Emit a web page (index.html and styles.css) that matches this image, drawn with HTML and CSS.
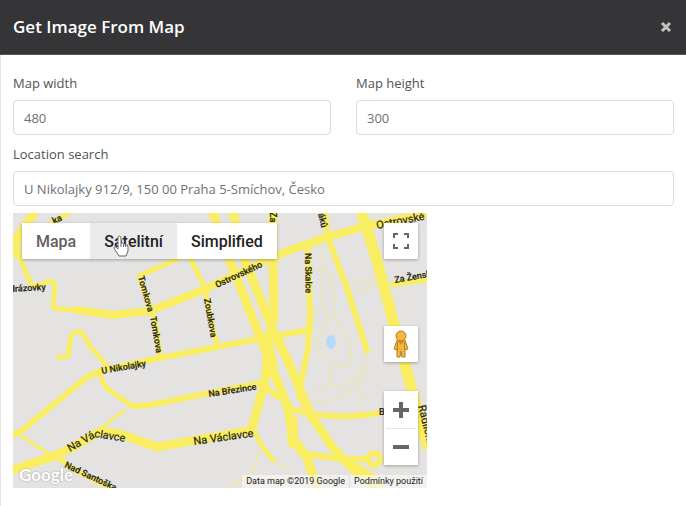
FILE: index.html
```html
<!DOCTYPE html>
<html lang="en">
<head>
<meta charset="utf-8">
<title>Get Image From Map</title>
<link rel="stylesheet" href="styles.css">
</head>
<body>
<main class="dialog" role="dialog" aria-labelledby="dialog-title">
  <header class="dialog-header">
    <h1 class="dialog-title" id="dialog-title">Get Image From Map</h1>
    <button class="close" type="button" aria-label="Close">
      <svg class="close-icon" viewBox="0 0 12 12"><path d="M2 2 10 10M10 2 2 10"/></svg>
    </button>
  </header>
  <form class="dialog-body">
    <div class="field-row">
      <div class="field">
        <label for="map-width">Map width</label>
        <input id="map-width" type="text" value="480">
      </div>
      <div class="field">
        <label for="map-height">Map height</label>
        <input id="map-height" type="text" value="300">
      </div>
    </div>
    <div class="field">
      <label for="location">Location search</label>
      <input id="location" type="text" value="U Nikolajky 912/9, 150 00 Praha 5-Smíchov, Česko">
    </div>
    <div class="map">
      <svg class="map-canvas" viewBox="13 213 414 275">
        <g class="path">
          <path d="M310 250 322 245 322 270M310 272 327 270 338 280M325 272Q319 280 321 298L327 316Q333 325 336 315L335 300 329 275M321 305 313 318 314 326M327 318 320 335 318 352Q325 364 345 367 353 366 351 348L345 332 335 318M329 366 332 378 328 386 308 394M332 384Q345 392 352 378L364 368M350 292 379 286M348 285 379 277M303 405Q335 402 349 393L362 374 367 352M357 412 361 402 360 385 365 370"/>
        </g>
        <g class="road road-thin">
          <path d="M18 434 48 453"/>
          <path d="M125 411Q108 420 103 429"/>
          <path class="faint" d="M260 451 253 471 230 487M277 463 290 471"/>
        </g>
        <g class="road road-small">
          <path d="M18 253 30 283 36 286 49 281Q55 281 55 288L53 304Q53 309 60 309L77 310"/>
          <path d="M58 357 66 357Q70 354 69 348L71 336Q74 331 82 332L90 346 107 366"/>
          <path d="M57 457 73 469 113 489"/>
          <path d="M252 428 262 446 273 460"/>
          <path d="M69 213 22 240"/>
          <path d="M100 373Q102 386 112 392L132 406"/>
          <path d="M150 271 139 276 148 300 156 325 160 355"/>
          <path d="M190 258 205 288 210 315 217 346"/>
          <path d="M150 271 180 258"/>
          <path d="M190 258 198 273"/>
        </g>
        <g class="road">
          <path d="M77 310 113 315 150 311 203 290 260 263 290 250 327 237 367 226 430 213" class="wide"/>
          <path d="M13 434 20 432 87 377 100 371 150 360 253 340 310 330"/>
          <path d="M132 406 150 405 260 383 278 397"/>
          <path d="M308 248 310 310 308 348 302 378 299 398"/>
          <path d="M325 213 328 238 346 285 367 351"/>
          <path d="M292 409Q330 421 379 413"/>
          <path d="M300 453 340 459 367 459"/>
          <path d="M393 284 430 279"/>
          <path d="M347 461 372 475 380 488"/>
          <circle cx="374" cy="459" r="6"/>
        </g>
        <g class="road road-main">
          <path d="M34 213 15 241 17 254"/>
          <path d="M13 470 57 455 75 446 100 431 120 434 157 447 253 430"/>
          <path d="M213 213 230 261 262 342 288 408 293 438 307 458 317 488"/>
          <path d="M233 213 245 261 273 330 292 370 310 414 333 448 352 468 378 488"/>
          <path d="M273 213 273 258 274 315 268 348 265 381 252 428"/>
        </g>
        <g class="road road-major">
          <path d="M362 213 377 261 405 365 427 445"/>
          <path d="M266 338 272 365"/>
          <path d="M292 420 293 443"/>
        </g>
        <ellipse class="pond" cx="331" cy="342" rx="5" ry="7"/>
        <g class="label">
          <text transform="translate(54 224) rotate(-25)">ka</text>
          <text transform="translate(10 292) rotate(-3)">drázovky</text>
          <text transform="translate(138 277) rotate(74)">Tomkova</text>
          <text transform="translate(150 317) rotate(80)">Tomkova</text>
          <text transform="translate(204 299) rotate(80)">Zoubkova</text>
          <text transform="translate(217 288) rotate(-25)">Ostrovského</text>
          <text transform="translate(305 253) rotate(89)">Na Skalce</text>
          <text transform="translate(318 214) rotate(76)">áků</text>
          <text transform="translate(270 212) rotate(90)">Za</text>
          <text transform="translate(395 283) rotate(-10)">Za Žensk</text>
          <text transform="translate(102 374) rotate(-10)">U Nikolajky</text>
          <text transform="translate(209 397) rotate(-9)">Na Březince</text>
          <text transform="translate(64 467) rotate(25)">Nad Santoška</text>
          <text transform="translate(379 415)">B</text>
        </g>
        <g class="label label-large">
          <text transform="translate(377 229) rotate(-11)">Ostrovské</text>
          <text transform="translate(70 452) rotate(-30)">Na Vá</text>
          <text transform="translate(94 437) rotate(9)">clavce</text>
          <text transform="translate(194 445) rotate(-8)">Na Václavce</text>
          <text transform="translate(418 406) rotate(76)">Radlická</text>
        </g>
      </svg>
      <div class="map-types">
        <button type="button" class="map-type current">Mapa</button>
        <button type="button" class="map-type hovered">Satelitní</button>
        <button type="button" class="map-type">Simplified</button>
      </div>
      <div class="map-side">
        <button type="button" class="tile" aria-label="Fullscreen">
          <svg class="fullscreen-icon" viewBox="0 0 18 18"><path d="M2 6V2H6M12 2H16V6M16 12V16H12M6 16H2V12"/></svg>
        </button>
        <div class="side-bottom">
          <button type="button" class="tile" aria-label="Street View">
            <svg class="pegman" viewBox="0 0 18 28"><path d="M5 10Q9 8 13 10L16 19 13 20 13 27H10L9 21 8 27H5V20L2 19Z"/><path class="shade" d="M5.500 12 5.500 20M12.500 12 12.500 20"/><path class="scarf" d="M5 10H13L9 15Z"/><circle cx="9" cy="6" r="5"/></svg>
          </button>
          <div class="zoom">
            <button type="button" aria-label="Zoom in"><svg viewBox="0 0 18 18"><path d="M9 1V17M1 9H17"/></svg></button>
            <button type="button" aria-label="Zoom out"><svg viewBox="0 0 18 18"><path d="M1 9H17"/></svg></button>
          </div>
        </div>
      </div>
      <span class="brand">Google</span>
      <div class="credits"><span>Data map ©2019 Google</span><a href="#">Podmínky použití</a></div>
      <svg class="pointer" viewBox="0 0 16 22"><path d="M5 12V3Q5 1 6.500 1T8 3V8Q10 7 10.500 9 12 8 12.500 10 15 9 15 12V16L13 21H6L1 13Q1 10 5 14Z"/><path d="M8 8V12M10.500 9V12M12.500 10V12"/></svg>
    </div>
  </form>
</main>
</body>
</html>
```
FILE: styles.css
```css
* { box-sizing: border-box; }
body { margin: 0; background: #fff; font-family: "Open Sans", "Noto Sans", sans-serif; font-size: 13px; color: #505357; }
button { border: 0; padding: 0; background: none; font: inherit; }
.dialog { min-height: 100vh; border-left: 1px solid #e4e4e4; }
.dialog-header { display: flex; align-items: center; justify-content: space-between; height: 55px; margin-left: -1px; padding: 0 13px; background: #353537; border-bottom: 1px solid #555; }
.dialog-title { margin: 0; font-size: 17px; line-height: 24px; font-weight: 600; color: #fff; }
.close { display: flex; padding: 1px; }
.close-icon { width: 12px; height: 12px; fill: none; stroke: #c4c4c4; stroke-width: 3; }
.dialog-body { display: flex; flex-direction: column; gap: 9px; padding: 18px 12px; }
.field-row { display: grid; grid-template-columns: 1fr 1fr; gap: 25px; }
.field { display: flex; flex-direction: column; gap: 7px; }
.field label { line-height: 20px; }
.field input { width: 100%; height: 35px; padding: 0 10px; border: 1px solid #dcdcde; border-radius: 4px; font: inherit; color: #6d7176; background: #fff; outline: 0; }
.map { position: relative; width: 100%; max-width: 414px; margin-top: -2px; overflow: hidden; font-family: Roboto, sans-serif; }
.map-canvas { display: block; width: 100%; background: #e5e3e2; }
.road { fill: none; stroke: #f9ee62; stroke-width: 6; stroke-linejoin: round; stroke-linecap: round; }
.road .wide { stroke-width: 8; }
.road-thin { stroke-width: 3; }
.road-thin .faint { stroke-width: 1; }
.road-small { stroke-width: 5; }
.road-main { stroke-width: 9; }
.road-major { stroke-width: 11; }
.path { fill: none; stroke: #eee79d; stroke-width: 1; }
.pond { fill: #b4dafa; }
.label { font-size: 9px; font-weight: 500; fill: #292814; stroke: #292814; stroke-width: 0.2; }
.label-large { font-size: 11px; font-weight: 400; }
.map-types { position: absolute; top: 10px; left: 9px; display: flex; box-shadow: 0 1px 3px rgba(0, 0, 0, 0.3); }
.map-type { height: 36px; padding: 0 14px; font-size: 16px; font-weight: 500; color: #222; background: #fff; }
.map-type.current { color: #606060; }
.map-type.hovered { background: #ebebeb; }
.map-side { position: absolute; top: 10px; right: 9px; bottom: 23px; display: flex; flex-direction: column; justify-content: space-between; }
.side-bottom { display: flex; flex-direction: column; gap: 29px; }
.tile, .zoom { width: 34px; background: #fff; box-shadow: 0 1px 3px rgba(0, 0, 0, 0.3); }
.tile { display: flex; align-items: center; justify-content: center; height: 36px; }
.fullscreen-icon { width: 18px; height: 18px; fill: none; stroke: #666; stroke-width: 2; }
.pegman { width: 18px; height: 28px; fill: #f4b73b; stroke: #af8131; stroke-width: 1; }
.pegman .shade { fill: none; }
.pegman .scarf { fill: #e0862f; stroke: none; }
.zoom { display: flex; flex-direction: column; padding: 0 2px; }
.zoom button { display: flex; align-items: center; justify-content: center; height: 37px; }
.zoom button + button { border-top: 1px solid #e6e6e6; }
.zoom svg { width: 18px; height: 18px; stroke: #666; stroke-width: 4; }
.brand { position: absolute; left: 6px; bottom: 2px; font-family: Lato, sans-serif; font-size: 17px; font-weight: 700; line-height: 22px; color: #fff; text-shadow: 0 0 2px #999; }
.credits { position: absolute; right: 0; bottom: 0; display: flex; font-size: 9px; line-height: 13px; color: #222; background: rgba(245, 245, 242, 0.75); }
.credits span, .credits a { padding: 0 4px; color: inherit; text-decoration: none; }
.credits a { border-left: 1px solid #ddd; }
.pointer { position: absolute; left: 100px; top: 22px; width: 16px; height: 22px; fill: #fff; stroke: #666; stroke-width: 1; }
```
